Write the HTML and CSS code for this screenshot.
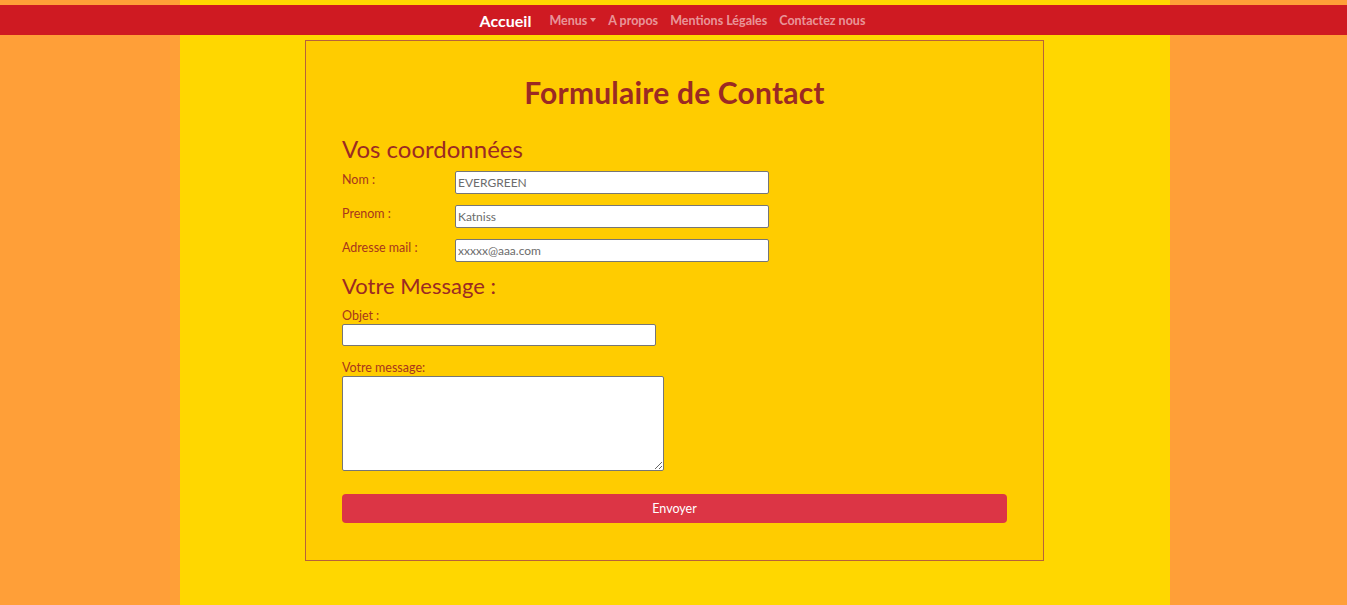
FILE: index.html
```html
<!DOCTYPE html>
<html lang="fr">
<head>
<meta charset="utf-8">
<title>Contact</title>
<link rel="stylesheet" href="styles.css">
</head>
<body>
<nav class="navbar">
  <a class="brand" href="#">Accueil</a>
  <a class="nav-link" href="#">Menus<span class="caret"></span></a>
  <a class="nav-link" href="#">A propos</a>
  <a class="nav-link" href="#">Mentions Légales</a>
  <a class="nav-link" href="#">Contactez nous</a>
</nav>
<main class="box">
  <h1 class="title">Formulaire de Contact</h1>
  <form class="form">
    <h2 class="section">Vos coordonnées</h2>
    <div class="row">
      <label class="lbl">Nom :</label>
      <input class="field" type="text" value="EVERGREEN">
    </div>
    <div class="row">
      <label class="lbl">Prenom :</label>
      <input class="field" type="text" value="Katniss">
    </div>
    <div class="row">
      <label class="lbl">Adresse mail :</label>
      <input class="field" type="text" value="xxxxx@aaa.com">
    </div>
    <h2 class="section small">Votre Message :</h2>
    <label class="lbl block">Objet :</label>
    <input class="field objet" type="text">
    <label class="lbl block msg">Votre message:</label>
    <textarea class="area"></textarea>
    <button class="btn" type="button">Envoyer</button>
  </form>
</main>
</body>
</html>
```
FILE: styles.css
```css
html, body {
  margin: 0;
  padding: 0;
}
body {
  min-height: 605px;
  font-family: Lato, "Open Sans", sans-serif;
  background: linear-gradient(90deg, #ff9f38 0, #ff9f38 180px, #ffd700 180px, #ffd700 1170px, #ff9f38 1170px);
  padding-top: 5px;
  box-sizing: border-box;
}
.navbar {
  height: 30px;
  background: #cf1a22;
  display: flex;
  align-items: center;
  justify-content: center;
  padding-left: 4px;
}
.navbar a {
  text-decoration: none;
}
.brand {
  color: #fff;
  font-size: 16px;
  font-weight: 700;
  margin-right: 12px;
}
.nav-link {
  color: rgba(255, 255, 255, 0.55);
  font-size: 12.5px;
  font-weight: 700;
  padding: 0 6px;
  display: flex;
  align-items: center;
}
.caret {
  display: inline-block;
  margin-left: 3px;
  width: 0;
  height: 0;
  border-left: 3.5px solid transparent;
  border-right: 3.5px solid transparent;
  border-top: 4px solid rgba(255, 255, 255, 0.55);
}
.box {
  width: 739px;
  box-sizing: border-box;
  margin: 5px 0 0 calc(50% - 368.5px);
  background: #ffcc00;
  border: 1px solid #b7623a;
  padding: 33px 36px 37px;
}
.title {
  margin: 0;
  text-align: center;
  color: #9b2a23;
  font-size: 30px;
  line-height: 36px;
  font-weight: 700;
  letter-spacing: 0.2px;
}
.form {
  display: flex;
  flex-direction: column;
  align-items: flex-start;
}
.section {
  margin: 24px 0 8px;
  color: #9b2a23;
  font-size: 24px;
  line-height: 29px;
  font-weight: 400;
}
.section.small {
  font-size: 22px;
  line-height: 27px;
  margin: 10px 0 9px;
}
.row {
  display: flex;
  align-items: flex-start;
  margin-bottom: 11px;
}
.row:nth-of-type(3) {
  margin-bottom: 0;
}
.lbl {
  color: #a8361c;
  font-size: 12.5px;
  line-height: 15px;
  width: 113px;
  padding-top: 1px;
}
.lbl.block {
  width: auto;
  padding-top: 0;
  margin-bottom: 1px;
}
.lbl.msg {
  margin-top: 14px;
}
.field {
  width: 314px;
  height: 23px;
  box-sizing: border-box;
  border: 1px solid #767676;
  border-radius: 2px;
  background: #fff;
  padding: 1px 2px;
  font-family: Lato, "Open Sans", sans-serif;
  font-size: 12px;
  color: #6c6c6c;
}
.field.objet {
  width: 314px;
  height: 22px;
}
.area {
  width: 322px;
  height: 95px;
  box-sizing: border-box;
  border: 1px solid #767676;
  border-radius: 2px;
  background: #fff;
  margin: 0;
}
.btn {
  margin-top: 23px;
  width: 100%;
  height: 29px;
  border: none;
  border-radius: 4px;
  background: #dc3545;
  color: #fff;
  font-family: Lato, "Open Sans", sans-serif;
  font-size: 12.5px;
}
```
